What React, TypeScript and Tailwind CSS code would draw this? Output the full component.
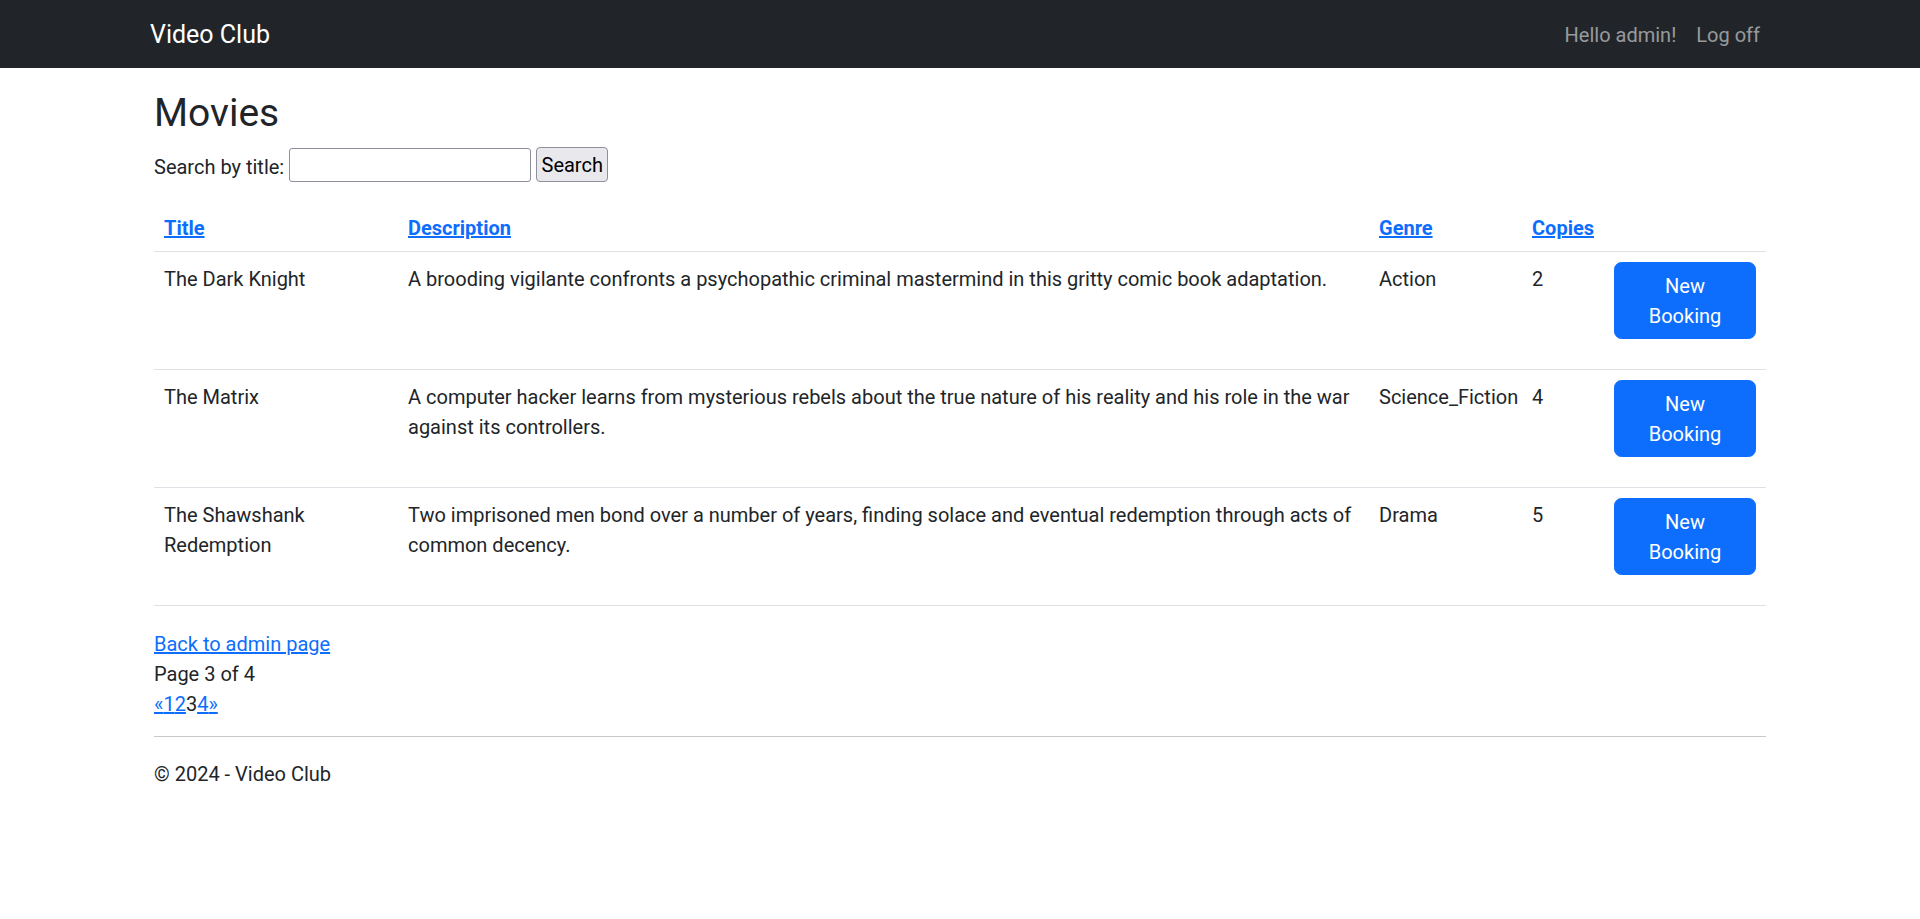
const MOVIES = [
  {
    title: 'The Dark Knight',
    description: 'A brooding vigilante confronts a psychopathic criminal mastermind in this gritty comic book adaptation.',
    genre: 'Action',
    copies: 2,
  },
  {
    title: 'The Matrix',
    description:
      'A computer hacker learns from mysterious rebels about the true nature of his reality and his role in the war against its controllers.',
    genre: 'Science_Fiction',
    copies: 4,
  },
  {
    title: 'The Shawshank Redemption',
    description:
      'Two imprisoned men bond over a number of years, finding solace and eventual redemption through acts of common decency.',
    genre: 'Drama',
    copies: 5,
  },
];

const COLUMNS = ['Title', 'Description', 'Genre', 'Copies'];

function Navbar() {
  return (
    <nav className="h-[68px] bg-[#212529]">
      <div className="mx-auto flex h-full w-[1620px] items-center justify-between">
        <a href="#" className="pt-[2px] text-[25px] leading-[37.5px] text-white">
          Video Club
        </a>
        <ul className="flex items-center">
          <li>
            <span className="block px-[10px] pt-[2px] text-[20px] leading-[30px] text-[#ffffff8c]">Hello admin!</span>
          </li>
          <li>
            <a href="#" className="block px-[10px] pt-[2px] text-[20px] leading-[30px] text-[#ffffff8c]">
              Log off
            </a>
          </li>
        </ul>
      </div>
    </nav>
  );
}

function SearchForm() {
  return (
    <form className="flex h-[35px] items-center gap-[5px]">
      <label className="pt-[4px]">Search by title:</label>
      <input
        type="text"
        className="h-[34px] w-[242px] rounded-[3px] border border-[#8f8f9d] bg-white px-[3px] text-[20px] outline-none"
      />
      <button
        type="button"
        className="h-[35px] w-[72px] rounded-[4px] border border-[#8f8f9d] bg-[#e9e9ed] text-center text-[20px] leading-[30px] text-black"
      >
        Search
      </button>
    </form>
  );
}

function MoviesTable() {
  return (
    <table className="mt-[21px] w-full table-fixed border-collapse">
      <colgroup>
        <col className="w-[244px]" />
        <col className="w-[971px]" />
        <col className="w-[153px]" />
        <col className="w-[82px]" />
        <col className="w-[162px]" />
      </colgroup>
      <thead>
        <tr className="border-b border-[#dee2e6]">
          {COLUMNS.map((c) => (
            <th key={c} className="px-[10px] pb-[8px] pt-[10px] text-left align-bottom font-bold">
              <a href="#" className="text-[#0d6efd] underline">
                {c}
              </a>
            </th>
          ))}
          <th className="px-[10px] pb-[8px] pt-[10px]" />
        </tr>
      </thead>
      <tbody>
        {MOVIES.map((m) => (
          <tr key={m.title} className="border-b border-[#dee2e6] align-top">
            <td className="px-[10px] pb-[8px] pt-[12px]">{m.title}</td>
            <td className="px-[10px] pb-[8px] pt-[12px]">{m.description}</td>
            <td className="whitespace-nowrap px-[10px] pb-[8px] pt-[12px]">{m.genre}</td>
            <td className="px-[10px] pb-[8px] pt-[12px]">{m.copies}</td>
            <td className="px-[10px] pb-[30px] pt-[10px]">
              <button
                type="button"
                className="h-[77px] w-[142px] rounded-[7.5px] border border-[#0d6efd] bg-[#0d6efd] px-[15px] py-[7.5px] text-center text-[20px] leading-[30px] text-white"
              >
                New Booking
              </button>
            </td>
          </tr>
        ))}
      </tbody>
    </table>
  );
}

function Pager() {
  return (
    <div className="mt-[23px]">
      <a href="#" className="text-[#0d6efd] underline">
        Back to admin page
      </a>
      <div>Page 3 of 4</div>
      <div>
        <a href="#" className="text-[#0d6efd] underline">
          «
        </a>
        <a href="#" className="text-[#0d6efd] underline">
          1
        </a>
        <a href="#" className="text-[#0d6efd] underline">
          2
        </a>
        <span>3</span>
        <a href="#" className="text-[#0d6efd] underline">
          4
        </a>
        <a href="#" className="text-[#0d6efd] underline">
          »
        </a>
      </div>
    </div>
  );
}

export default function App() {
  return (
    <div className="min-h-screen bg-white font-['Roboto',sans-serif] text-[20px] leading-[30px] text-[#212529]">
      <Navbar />
      <main className="mx-auto w-[1612px]">
        <h1 className="mb-[10px] mt-[21px] text-[39px] font-normal leading-[48px]">Movies</h1>
        <SearchForm />
        <MoviesTable />
        <Pager />
        <div className="mt-[17px] h-px bg-[#c8c9ca]" />
        <footer className="pt-[22px]">© 2024 - Video Club</footer>
      </main>
    </div>
  );
}
